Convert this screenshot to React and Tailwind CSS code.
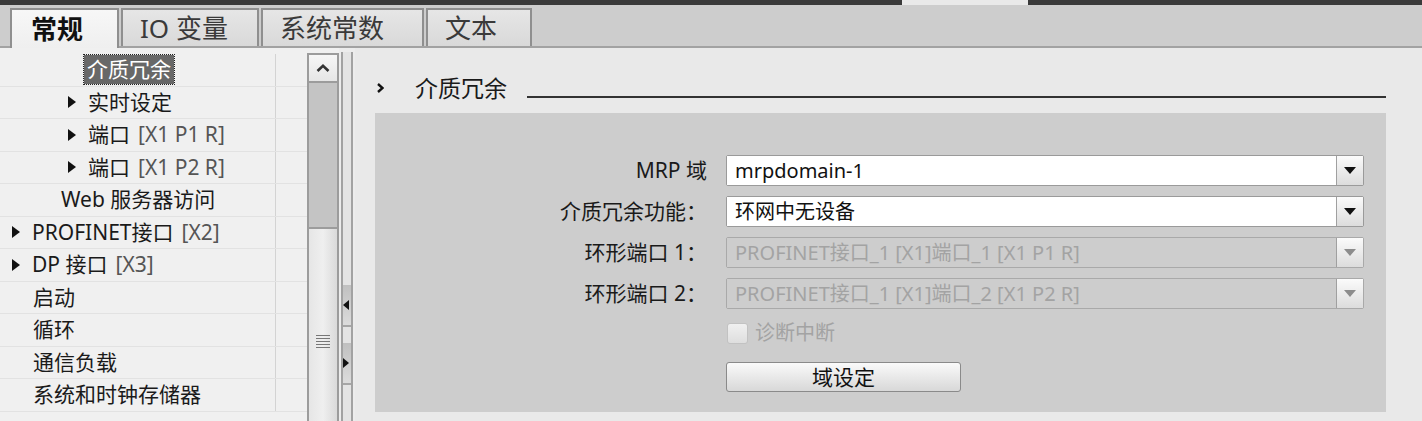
import React from 'react';

const treeRows = [
    { label: '介质冗余', pad: 'pl-[84px]', selected: true },
    { label: '实时设定', pad: 'pl-[68px]', arrow: true },
    { label: '端口', suffix: '[X1 P1 R]', pad: 'pl-[68px]', arrow: true },
    { label: '端口', suffix: '[X1 P2 R]', pad: 'pl-[68px]', arrow: true },
    { label: 'Web 服务器访问', pad: 'pl-[61px]' },
    { label: 'PROFINET接口', suffix: '[X2]', pad: 'pl-[12px]', arrow: true },
    { label: 'DP 接口', suffix: '[X3]', pad: 'pl-[12px]', arrow: true },
    { label: '启动', pad: 'pl-[33px]' },
    { label: '循环', pad: 'pl-[33px]' },
    { label: '通信负载', pad: 'pl-[33px]' },
    { label: '系统和时钟存储器', pad: 'pl-[33px]' },
];

const tabs = [
    { label: '常规', w: 'w-[109px]', pad: 'pl-[19px]', active: true },
    { label: 'IO 变量', w: 'w-[138px]', pad: 'pl-[17px]' },
    { label: '系统常数', w: 'w-[163px]', pad: 'pl-[17px]' },
    { label: '文本', w: 'w-[106px]', pad: 'pl-[17px]' },
];

const Arrow = ({ className = '' }) => (
    <svg width="8" height="12" viewBox="0 0 8 12" className={className}>
        <polygon points="0,0 8,6 0,12" fill="#111" />
    </svg>
);

const Caret = ({ disabled }) => (
    <svg width="12" height="7" viewBox="0 0 12 7">
        <polygon points="0,0 12,0 6,7" fill={disabled ? '#8c8c8c' : '#111'} />
    </svg>
);

const Select = ({ value, disabled }) => (
    <div className={`flex-1 h-full flex border rounded-[2px] ${disabled ? 'border-[#a9a9a9]' : 'border-[#9a9a9a]'}`}>
        <div className={`flex-1 flex items-center pl-[8px] text-[20px] whitespace-nowrap overflow-hidden ${disabled ? 'bg-[#cdcdcd] text-[#a3a3a3]' : 'bg-white text-[#111]'}`}>
            {value}
        </div>
        <div className="w-[27px] border-l border-[#a0a0a0] bg-gradient-to-b from-[#fbfbfb] to-[#dcdcdc] flex items-center justify-center">
            <Caret disabled={disabled} />
        </div>
    </div>
);

const FormRow = ({ label, value, disabled }) => (
    <div className="flex items-center h-[31px] mb-[10px]">
        <div className="w-[332px] text-right text-[21px] text-[#1a1a1a] whitespace-nowrap">{label}</div>
        <div className="ml-[19px] flex-1 h-full flex">
            <Select value={value} disabled={disabled} />
        </div>
    </div>
);

export default function App() {
    return (
        <div className="w-[1422px] h-[421px] overflow-hidden flex flex-col bg-[#e8e8e8] font-['Noto_Sans','Noto_Sans_CJK_SC',sans-serif] leading-none">
            {/* top strip */}
            <div className="h-[5px] shrink-0 flex">
                <div className="w-[902px] bg-[#3a3a3a]" />
                <div className="w-[126px] bg-[#e9e9e9]" />
                <div className="flex-1 bg-[#3a3a3a]" />
            </div>

            {/* tabs */}
            <div className="h-[43px] shrink-0 bg-[#cdcdcd] border-b-2 border-[#a2a2a2] flex items-end pl-[10px] gap-[2px]">
                {tabs.map((t) => (
                    <div
                        key={t.label}
                        className={`${t.w} ${t.pad} flex items-center border-2 border-b-0 border-[#8f8f8f] text-[26px] ${t.active
                            ? 'h-[40px] -mb-[2px] bg-gradient-to-b from-[#f7f7f7] to-[#efefef] font-bold text-[#111]'
                            : 'h-[38px] bg-gradient-to-b from-[#e6e6e6] to-[#d9d9d9] text-[#3a3a3a]'}`}
                    >
                        {t.label}
                    </div>
                ))}
            </div>

            <div className="flex flex-1 min-h-0">
                {/* tree */}
                <div className="w-[307px] shrink-0 bg-[#f0f0f0] pt-[6px] flex flex-col">
                    {treeRows.map((r, i) => (
                        <div key={i} className="h-[32.5px] shrink-0 flex border-b border-[#e2e2e2]">
                            <div className={`w-[276px] border-r border-[#d3d3d3] flex items-center ${r.pad} text-[21px] text-[#1a1a1a] whitespace-nowrap`}>
                                {r.arrow && <Arrow className="mr-[12px] shrink-0" />}
                                {r.selected ? (
                                    <span className="bg-[#686868] text-white px-[3px] h-[29px] flex items-center outline-1 outline-dotted outline-[#222]">{r.label}</span>
                                ) : (
                                    <span>
                                        {r.label}
                                        {r.suffix && <span className="ml-[8px] text-[#555]">{r.suffix}</span>}
                                    </span>
                                )}
                            </div>
                        </div>
                    ))}
                </div>

                {/* scrollbar */}
                <div className="w-[32px] shrink-0 bg-[#f0f0f0] pt-[5px] flex flex-col">
                    <div className="h-[30px] shrink-0 border-2 border-[#9c9c9c] bg-gradient-to-b from-[#f6f6f6] to-[#e6e6e6] flex items-center justify-center">
                        <svg width="14" height="8" viewBox="0 0 14 8">
                            <polyline points="1.5,7 7,1.8 12.5,7" fill="none" stroke="#333" strokeWidth="2.6" />
                        </svg>
                    </div>
                    <div className="h-[144px] shrink-0 bg-[#c4c4c4] border-x-2 border-[#9c9c9c]" />
                    <div className="flex-1 border-2 border-b-0 border-[#9c9c9c] bg-gradient-to-r from-[#e6e6e6] via-[#efefef] to-[#dadada] flex flex-col items-center pt-[106px]">
                        <div className="flex flex-col gap-[2px]">
                            <div className="w-[14px] h-[1px] bg-[#777]" />
                            <div className="w-[14px] h-[1px] bg-[#777]" />
                            <div className="w-[14px] h-[1px] bg-[#777]" />
                            <div className="w-[14px] h-[1px] bg-[#777]" />
                            <div className="w-[14px] h-[1px] bg-[#777]" />
                        </div>
                    </div>
                </div>

                {/* splitter */}
                <div className="w-[16px] shrink-0 bg-[#ececec] pt-[4px] flex flex-col">
                    <div className="flex-1 mx-[2px] border-x-2 border-[#a2a2a2] bg-[#e4e4e4] flex flex-col">
                        <div className="h-[233px] shrink-0" />
                        <div className="h-[42px] shrink-0 bg-gradient-to-b from-[#c0c0c0] to-[#dcdcdc] border-b-2 border-[#a6a6a6] flex items-center justify-start">
                            <svg width="6" height="10" viewBox="0 0 6 10">
                                <polygon points="6,0 0,5 6,10" fill="#111" />
                            </svg>
                        </div>
                        <div className="h-[16px] shrink-0" />
                        <div className="h-[42px] shrink-0 bg-gradient-to-b from-[#c0c0c0] to-[#dcdcdc] border-b-2 border-[#a6a6a6] flex items-center justify-start">
                            <svg width="6" height="10" viewBox="0 0 6 10">
                                <polygon points="0,0 6,5 0,10" fill="#111" />
                            </svg>
                        </div>
                    </div>
                </div>

                {/* content */}
                <div className="flex-1 bg-[#e9e9e9] pl-[20px] pr-[36px] flex flex-col">
                    <div className="mt-[25px] h-[30px] shrink-0 flex items-end">
                        <div className="h-[30px] flex items-center pl-[2px]">
                            <svg width="7" height="10" viewBox="0 0 7 10">
                                <polyline points="1,1 5.5,5 1,9" fill="none" stroke="#111" strokeWidth="2.4" />
                            </svg>
                        </div>
                        <div className="ml-[31px] h-[30px] flex items-center text-[23px] text-[#1a1a1a]">介质冗余</div>
                        <div className="ml-[20px] mb-[5px] flex-1 h-[2px] bg-[#333]" />
                    </div>

                    <div className="mt-[10px] h-[299px] shrink-0 bg-[#cdcdcd] pt-[42px] pr-[22px]">
                        <FormRow label="MRP 域" value="mrpdomain-1" />
                        <FormRow label="介质冗余功能：" value="环网中无设备" />
                        <FormRow label="环形端口 1：" value="PROFINET接口_1 [X1]端口_1 [X1 P1 R]" disabled />
                        <FormRow label="环形端口 2：" value="PROFINET接口_1 [X1]端口_2 [X1 P2 R]" disabled />

                        <div className="mt-[14px] ml-[352px] h-[20px] flex items-center">
                            <div className="w-[21px] h-[21px] rounded-[3px] border border-[#c2c2c2] bg-gradient-to-b from-[#f0f0f0] to-[#dedede]" />
                            <span className="ml-[7px] text-[20px] text-[#a3a3a3]">诊断中断</span>
                        </div>

                        <div className="mt-[19px] ml-[351px] w-[235px] h-[30px] rounded-[3px] border border-[#8a8a8a] bg-gradient-to-b from-[#fafafa] to-[#d8d8d8] flex items-center justify-center text-[21px] text-[#111]">
                            域设定
                        </div>
                    </div>
                </div>
            </div>
        </div>
    );
}
